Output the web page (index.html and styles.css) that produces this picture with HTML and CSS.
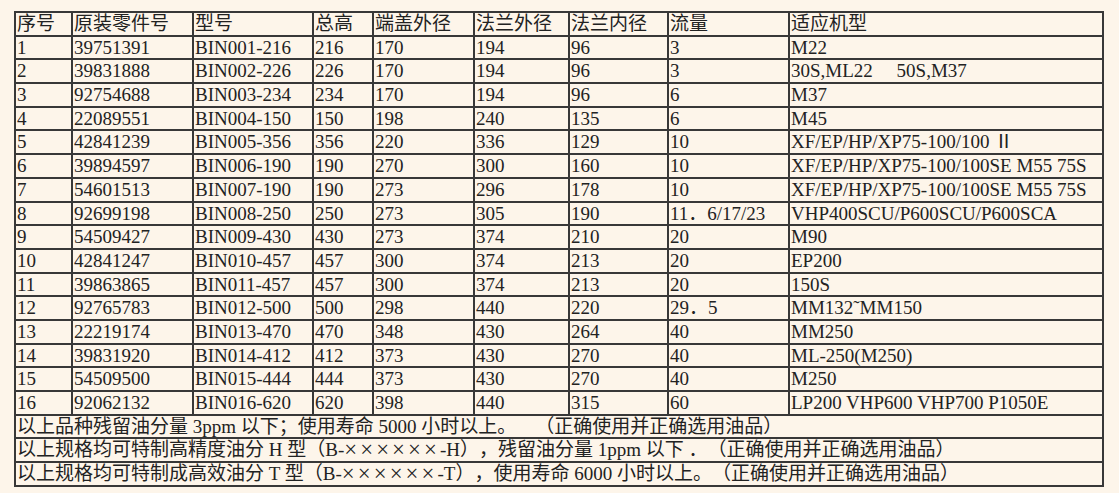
FILE: index.html
```html
<!DOCTYPE html>
<html lang="zh-CN">
<head>
<meta charset="utf-8">
<title>油分规格表</title>
<link rel="stylesheet" href="styles.css">
</head>
<body>
<div class="sheet" role="table">
  <div class="c">序号</div><div class="c">原装零件号</div><div class="c">型号</div><div class="c">总高</div><div class="c">端盖外径</div><div class="c">法兰外径</div><div class="c">法兰内径</div><div class="c">流量</div><div class="c">适应机型</div>
  <div class="c">1</div><div class="c">39751391</div><div class="c">BIN001-216</div><div class="c">216</div><div class="c">170</div><div class="c">194</div><div class="c">96</div><div class="c">3</div><div class="c">M22</div>
  <div class="c">2</div><div class="c">39831888</div><div class="c">BIN002-226</div><div class="c">226</div><div class="c">170</div><div class="c">194</div><div class="c">96</div><div class="c">3</div><div class="c pre">30S,ML22     50S,M37</div>
  <div class="c">3</div><div class="c">92754688</div><div class="c">BIN003-234</div><div class="c">234</div><div class="c">170</div><div class="c">194</div><div class="c">96</div><div class="c">6</div><div class="c">M37</div>
  <div class="c">4</div><div class="c">22089551</div><div class="c">BIN004-150</div><div class="c">150</div><div class="c">198</div><div class="c">240</div><div class="c">135</div><div class="c">6</div><div class="c">M45</div>
  <div class="c">5</div><div class="c">42841239</div><div class="c">BIN005-356</div><div class="c">356</div><div class="c">220</div><div class="c">336</div><div class="c">129</div><div class="c">10</div><div class="c">XF/EP/HP/XP75-100/100 Ⅱ</div>
  <div class="c">6</div><div class="c">39894597</div><div class="c">BIN006-190</div><div class="c">190</div><div class="c">270</div><div class="c">300</div><div class="c">160</div><div class="c">10</div><div class="c">XF/EP/HP/XP75-100/100SE M55 75S</div>
  <div class="c">7</div><div class="c">54601513</div><div class="c">BIN007-190</div><div class="c">190</div><div class="c">273</div><div class="c">296</div><div class="c">178</div><div class="c">10</div><div class="c">XF/EP/HP/XP75-100/100SE M55 75S</div>
  <div class="c">8</div><div class="c">92699198</div><div class="c">BIN008-250</div><div class="c">250</div><div class="c">273</div><div class="c">305</div><div class="c">190</div><div class="c">11．6/17/23</div><div class="c">VHP400SCU/P600SCU/P600SCA</div>
  <div class="c">9</div><div class="c">54509427</div><div class="c">BIN009-430</div><div class="c">430</div><div class="c">273</div><div class="c">374</div><div class="c">210</div><div class="c">20</div><div class="c">M90</div>
  <div class="c">10</div><div class="c">42841247</div><div class="c">BIN010-457</div><div class="c">457</div><div class="c">300</div><div class="c">374</div><div class="c">213</div><div class="c">20</div><div class="c">EP200</div>
  <div class="c">11</div><div class="c">39863865</div><div class="c">BIN011-457</div><div class="c">457</div><div class="c">300</div><div class="c">374</div><div class="c">213</div><div class="c">20</div><div class="c">150S</div>
  <div class="c">12</div><div class="c">92765783</div><div class="c">BIN012-500</div><div class="c">500</div><div class="c">298</div><div class="c">440</div><div class="c">220</div><div class="c">29．5</div><div class="c">MM132˜MM150</div>
  <div class="c">13</div><div class="c">22219174</div><div class="c">BIN013-470</div><div class="c">470</div><div class="c">348</div><div class="c">430</div><div class="c">264</div><div class="c">40</div><div class="c">MM250</div>
  <div class="c">14</div><div class="c">39831920</div><div class="c">BIN014-412</div><div class="c">412</div><div class="c">373</div><div class="c">430</div><div class="c">270</div><div class="c">40</div><div class="c">ML-250(M250)</div>
  <div class="c">15</div><div class="c">54509500</div><div class="c">BIN015-444</div><div class="c">444</div><div class="c">373</div><div class="c">430</div><div class="c">270</div><div class="c">40</div><div class="c">M250</div>
  <div class="c">16</div><div class="c">92062132</div><div class="c">BIN016-620</div><div class="c">620</div><div class="c">398</div><div class="c">440</div><div class="c">315</div><div class="c">60</div><div class="c">LP200 VHP600 VHP700 P1050E</div>
  <div class="c note">以上品种残留油分量 3ppm 以下；使用寿命 5000 小时以上。　（正确使用并正确选用油品）</div>
  <div class="c note">以上规格均可特制高精度油分 H 型（B-<span class="x">××××××</span>-H），残留油分量 1ppm 以下 ．（正确使用并正确选用油品）</div>
  <div class="c note">以上规格均可特制成高效油分 T 型（B-<span class="x">××××××</span>-T），使用寿命 6000 小时以上。（正确使用并正确选用油品）</div>
</div>
</body>
</html>
```

FILE: styles.css
```css
html, body {
  margin: 0;
  padding: 0;
  background: #fdf5ea;
}
body {
  padding: 11px 0 0 14px;
}
.sheet {
  display: grid;
  grid-template-columns: 57px 121px 120px 60px 101px 95px 99px 121px 314px;
  grid-auto-rows: 23.7px;
  justify-content: start;
  box-sizing: border-box;
  width: 1090px;
  overflow: hidden;
  border-left: 2px solid #383838;
  border-top: 2px solid #383838;
  font-family: "Liberation Serif", "Noto Sans CJK SC", serif;
  font-size: 19px;
  color: #222222;
  text-spacing-trim: space-all;
}
.c {
  box-sizing: border-box;
  min-width: 0;
  border-right: 2px solid #383838;
  border-bottom: 2px solid #383838;
  padding: 0 0 0 1px;
  line-height: 21.7px;
  white-space: nowrap;
  overflow: hidden;
}
.pre { white-space: pre; }
.note {
  grid-column: 1 / -1;
}
.x {
  font-size: 22.8px;
  letter-spacing: 3.1px;
  vertical-align: -1px;
}
```
